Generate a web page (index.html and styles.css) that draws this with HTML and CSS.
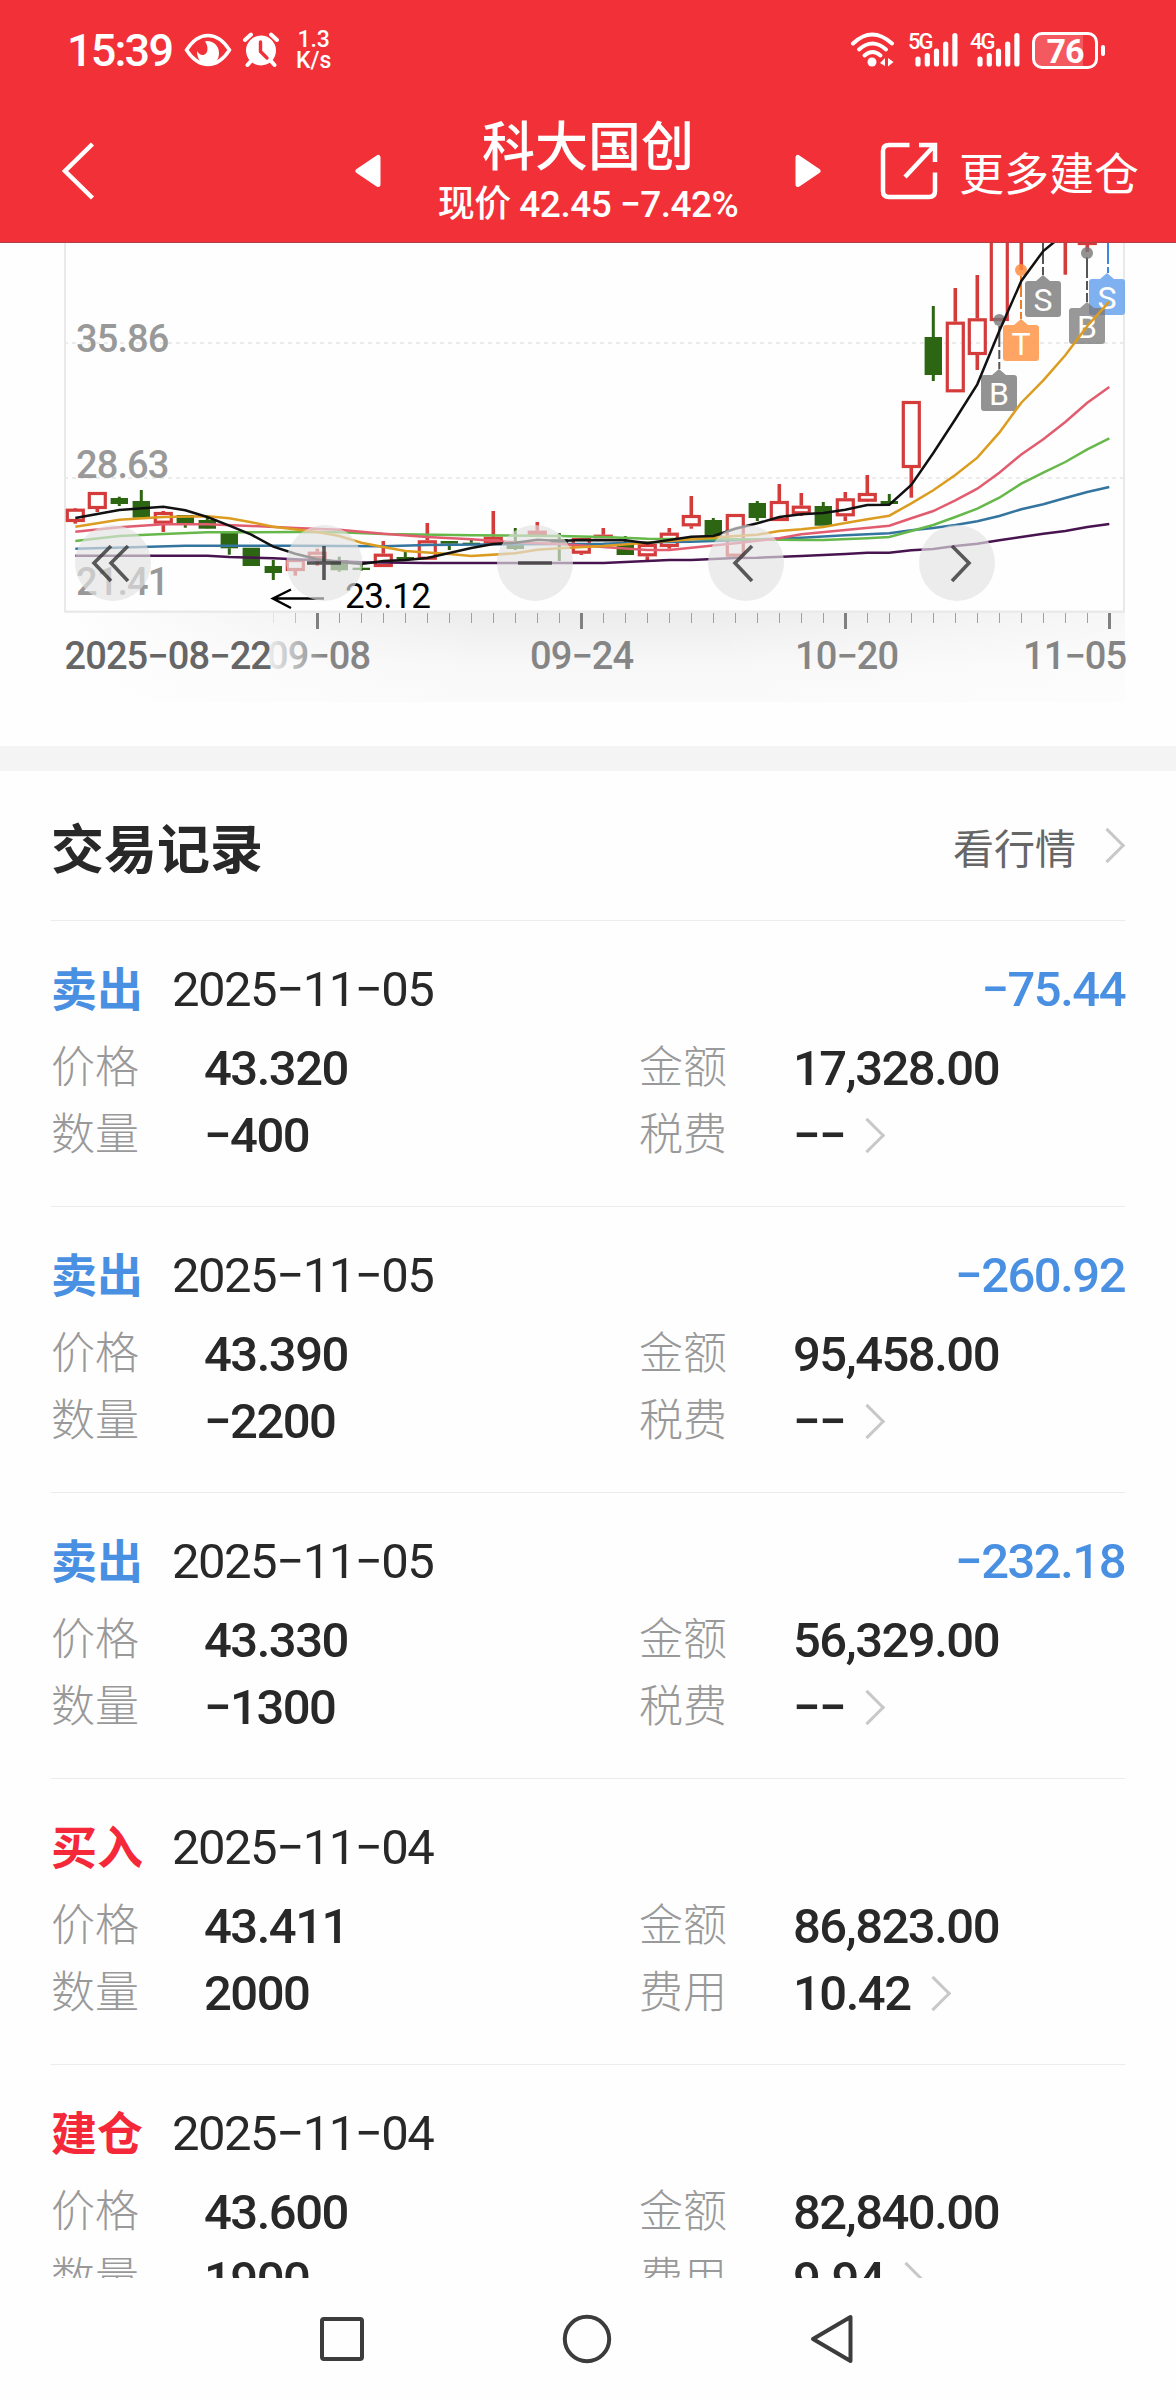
FILE: index.html
```html
<!DOCTYPE html>
<html lang="zh-CN">
<head>
    <meta charset="UTF-8">
    <meta name="viewport" content="width=device-width, initial-scale=1.0">
    <title>科大国创</title>
    <link rel="stylesheet" href="styles.css">
</head>
<body>

<header class="header">
    <div class="status-bar">
        <span class="clock">15:39</span>
        <svg class="eye" width="48" height="36" viewBox="0 0 48 36">
            <path d="M2.5 18 C9 8 16 3.500 24 3.500 S39 8 45.500 18 C39 28 32 32.500 24 32.500 S9 28 2.500 18Z" fill="none" stroke="#fff" stroke-width="3.400"/>
            <path d="M23 9 C30 9 35 14 35 21 C35 28 31 32 24 32 C17 32 13 27 13 19 C15 22 17 23.500 19.500 23 C24 22 25 15 21 9.500Z" fill="#fff"/>
        </svg>
        <svg class="alarm" width="36" height="36" viewBox="0 0 36 36">
            <circle cx="18" cy="18.500" r="15" fill="#fff"/>
            <path d="M2 8 L8 2.500 M34 8 L28 2.500 M8 29 L4.500 33 M28 29 L31.500 33" stroke="#fff" stroke-width="4" stroke-linecap="round"/>
            <path d="M17.500 10 V19.500 L24 26" fill="none" stroke="#f23038" stroke-width="3.400" stroke-linecap="round"/>
        </svg>
        <span class="speed">1.3<br>K/s</span>
        <div class="status-right">
            <svg class="wifi" width="46" height="36" viewBox="0 0 46 36">
                <g fill="none" stroke="#fff" stroke-width="4" stroke-linecap="round">
                    <path d="M3 11.500 Q22 -6.500 42 11.500"/>
                    <path d="M9 17.500 Q22.500 5.500 36 17.500"/>
                    <path d="M14.500 23.500 Q22.500 16.500 30.500 23.500"/>
                </g>
                <circle cx="22" cy="30" r="4.500" fill="#fff"/>
                <path d="M30 31 L35 26 V34Z M43.500 30 L38 26 V34.500Z" fill="#fff"/>
            </svg>
            <div class="signal">
                <span>5G</span>
                <svg width="43" height="36" viewBox="0 0 43 36"><path d="M3 27 V32 M12.300 23.500 V32 M21.500 19 V32 M30.700 12 V32 M39.900 3.500 V32" stroke="#fff" stroke-width="5.200" stroke-linecap="round"/></svg>
            </div>
            <div class="signal">
                <span>4G</span>
                <svg width="43" height="36" viewBox="0 0 43 36"><path d="M3 27 V32 M12.300 23.500 V32 M21.500 19 V32 M30.700 12 V32 M39.900 3.500 V32" stroke="#fff" stroke-width="5.200" stroke-linecap="round"/></svg>
            </div>
            <div class="battery">76</div>
        </div>
    </div>

    <nav class="title-bar">
        <svg class="back" width="36" height="60" viewBox="0 0 36 60"><path d="M32.500 3 L5 30 L32.500 57" fill="none" stroke="#fff" stroke-width="4.500"/></svg>
        <svg class="prev" width="28" height="34" viewBox="0 0 28 34"><path d="M24 3.500 V30.500 L4 17Z" fill="#fff" stroke="#fff" stroke-width="5" stroke-linejoin="round"/></svg>
        <div class="stock">
            <h1>科大国创</h1>
            <p>现价 42.45 −7.42%</p>
        </div>
        <svg class="next" width="28" height="34" viewBox="0 0 28 34"><path d="M4 3.500 V30.500 L24 17Z" fill="#fff" stroke="#fff" stroke-width="5" stroke-linejoin="round"/></svg>
        <div class="more">
            <svg width="60" height="60" viewBox="0 0 60 60">
                <path d="M30.500 4 H10 Q4 4 4 10 V50 Q4 56 10 56 H50 Q56 56 56 50 V31.500 M40 4 H56 V21 M55 5 L26 36" fill="none" stroke="#fff" stroke-width="4.500"/>
            </svg>
            <span>更多建仓</span>
        </div>
    </nav>
</header>

<main class="content">
    <section class="chart">
        <svg id="kline" width="1176" height="504" viewBox="0 242 1176 504"></svg>
    </section>

    <section class="trades">
        <div class="trades-head">
            <h2>交易记录</h2>
            <a class="quote">看行情 <i class="arrow"></i></a>
        </div>

        <article class="trade">
            <div class="trade-top"><b class="sell">卖出</b><span>2025−11−05</span><em>−75.44</em></div>
            <dl><dt>价格</dt><dd>43.320</dd><dt>金额</dt><dd>17,328.00</dd></dl>
            <dl><dt>数量</dt><dd>−400</dd><dt>税费</dt><dd>−− <i class="arrow"></i></dd></dl>
        </article>
        <article class="trade">
            <div class="trade-top"><b class="sell">卖出</b><span>2025−11−05</span><em>−260.92</em></div>
            <dl><dt>价格</dt><dd>43.390</dd><dt>金额</dt><dd>95,458.00</dd></dl>
            <dl><dt>数量</dt><dd>−2200</dd><dt>税费</dt><dd>−− <i class="arrow"></i></dd></dl>
        </article>
        <article class="trade">
            <div class="trade-top"><b class="sell">卖出</b><span>2025−11−05</span><em>−232.18</em></div>
            <dl><dt>价格</dt><dd>43.330</dd><dt>金额</dt><dd>56,329.00</dd></dl>
            <dl><dt>数量</dt><dd>−1300</dd><dt>税费</dt><dd>−− <i class="arrow"></i></dd></dl>
        </article>
        <article class="trade">
            <div class="trade-top"><b class="buy">买入</b><span>2025−11−04</span></div>
            <dl><dt>价格</dt><dd>43.411</dd><dt>金额</dt><dd>86,823.00</dd></dl>
            <dl><dt>数量</dt><dd>2000</dd><dt>费用</dt><dd>10.42 <i class="arrow"></i></dd></dl>
        </article>
        <article class="trade">
            <div class="trade-top"><b class="buy">建仓</b><span>2025−11−04</span></div>
            <dl><dt>价格</dt><dd>43.600</dd><dt>金额</dt><dd>82,840.00</dd></dl>
            <dl><dt>数量</dt><dd>1900</dd><dt>费用</dt><dd>9.94 <i class="arrow"></i></dd></dl>
        </article>
    </section>
</main>

<footer class="nav-keys">
    <svg width="48" height="52" viewBox="0 0 48 52"><rect x="4" y="6" width="40" height="40" rx="2" fill="none" stroke="#3c3c3c" stroke-width="4"/></svg>
    <svg width="52" height="52" viewBox="0 0 52 52"><circle cx="26" cy="26" r="22.200" fill="none" stroke="#3c3c3c" stroke-width="4"/></svg>
    <svg width="48" height="52" viewBox="0 0 48 52"><path d="M42.500 4 V48 L5 26Z" fill="none" stroke="#3c3c3c" stroke-width="4" stroke-linejoin="round"/></svg>
</footer>

<script src="script.js"></script>
</body>
</html>
```

FILE: styles.css
```css
* {
    box-sizing: border-box;
}

body {
    font-family: Roboto, "Noto Sans CJK SC", sans-serif;
    background-color: #fefefe;
    color: #282828;
    margin: 0;
    width: 1176px;
    height: 2400px;
    overflow: hidden;
    display: flex;
    flex-direction: column;
}

h1, h2, p, dl, dd {
    margin: 0;
}

.header {
    height: 243px;
    flex: none;
    background-color: #f23038;
    border-bottom: 1px solid #b04046;
    color: white;
}

/* phone status bar */
.status-bar {
    height: 100px;
    padding: 0 70px 0 67px;
    display: flex;
    align-items: center;
}

.clock {
    width: 117px;
    font-size: 45px;
    font-weight: 500;
    letter-spacing: -1.8px;
}

.alarm {
    margin-left: 11px;
}

.speed {
    margin-left: 17px;
    font-size: 23px;
    line-height: 21px;
    text-align: center;
    font-weight: 500;
}

.status-right {
    margin-left: auto;
    display: flex;
    align-items: center;
}

.signal {
    position: relative;
    width: 50px;
    height: 36px;
    margin-left: 12px;
    display: flex;
    justify-content: flex-end;
}

.signal span {
    position: absolute;
    left: 0;
    top: 0;
    font-size: 22px;
    line-height: 20px;
    font-weight: 500;
    letter-spacing: -2px;
}

.battery {
    position: relative;
    width: 66px;
    height: 37px;
    margin-left: 12px;
    margin-right: 8px;
    border: 3px solid white;
    border-radius: 10px;
    background: linear-gradient(to right, rgba(255, 255, 255, .2) 48px, transparent 48px);
    font-size: 34px;
    font-weight: bold;
    line-height: 32px;
    letter-spacing: -1px;
    text-align: center;
}

.battery::after {
    content: '';
    position: absolute;
    right: -10px;
    top: 10px;
    width: 4px;
    height: 11px;
    border-radius: 2px;
    background-color: white;
}

/* stock title */
.title-bar {
    height: 142px;
    padding: 0 37px 0 60px;
    display: flex;
    align-items: center;
}

.prev {
    margin-left: 258px;
}

.stock {
    width: 412px;
    text-align: center;
}

.stock h1 {
    font-size: 53px;
    line-height: 68px;
    font-weight: 500;
}

.stock p {
    font-size: 37px;
    line-height: 46px;
    font-weight: 500;
    letter-spacing: -.5px;
}

.more {
    margin-left: auto;
    display: flex;
    align-items: center;
    gap: 20px;
    font-size: 45px;
}

.content {
    height: 2035px;
    flex: none;
    overflow: hidden;
}

.chart {
    height: 528px;
    border-bottom: 25px solid #f4f4f4;
}

.chart svg {
    display: block;
}

.axis {
    font-size: 38px;
    letter-spacing: -.9px;
    font-weight: 500;
    fill: #999;
}

.date {
    fill: #858585;
}

.date-start {
    fill: #666;
}

.low {
    font-size: 35px;
    letter-spacing: -.5px;
    fill: #000;
}

.mark {
    font-size: 32px;
    fill: white;
    text-anchor: middle;
}

/* trade list */
.trades {
    padding: 0 51px;
}

.trades-head {
    height: 150px;
    display: flex;
    align-items: center;
    justify-content: space-between;
    border-bottom: 1px solid #ececec;
}

.trades-head h2 {
    font-size: 53px;
    font-weight: bold;
}

.quote {
    display: flex;
    align-items: center;
    font-size: 41px;
    color: #666;
}

.arrow {
    width: 25px;
    height: 25px;
    border-top: 3px solid #c8c8c8;
    border-right: 3px solid #c8c8c8;
    transform: rotate(45deg);
}

.quote .arrow {
    margin-left: 19px;
    margin-right: 5px;
}

.trade {
    height: 286px;
    padding-top: 29px;
    border-bottom: 1px solid #ececec;
    font-size: 49px;
    letter-spacing: -1.5px;
    font-weight: 500;
}

.trade-top {
    height: 85px;
    line-height: 80px;
    display: flex;
}

.trade-top b {
    width: 121px;
    font-size: 46px;
    letter-spacing: 0;
}

.trade-top span {
    font-weight: 400;
}

.trade-top em {
    margin-left: auto;
    font-style: normal;
    color: #4a90e2;
}

.sell {
    color: #4a90e2;
}

.buy {
    color: #f5283a;
}

.trade dl {
    display: grid;
    grid-template-columns: 153px 435px 154px 1fr;
    height: 67px;
    line-height: 67px;
}

.trade dt {
    font-size: 44px;
    font-weight: 300;
    letter-spacing: 0;
    color: #999;
}

.trade dd {
    display: flex;
    align-items: center;
}

.trade dd .arrow {
    margin-left: 10px;
}

.nav-keys {
    height: 122px;
    flex: none;
    padding: 0 320px 0 318px;
    display: flex;
    align-items: center;
    justify-content: space-between;
}
```

FILE: script.js
```javascript
const svg = document.getElementById('kline');
const RED = '#d43c3c';
const GREEN = '#2d6612';
const xAt = i => 75.3 + 22 * i;
let out = '';

// [up, bodyTop, bodyBottom, wickTop, wickBottom]
const candles = [
    [1, 507.7, 521, 507, 522.7], [1, 491, 508, 491, 511], [0, 497, 503, 495.7, 505], [0, 500, 516.7, 489, 516],
    [1, 511, 522.7, 510, 531], [0, 514, 522, 514, 526.7], [0, 519, 527.7, 516.7, 528], [0, 532, 547.3, 532, 553.7],
    [0, 546.7, 565, 547, 565], [0, 565, 572, 559, 579], [1, 558, 570, 558, 574.7], [1, 550.7, 558, 547.7, 565],
    [0, 559, 569.3, 555.7, 570.7], [0, 566.7, 569, 563, 569.7], [1, 552.7, 566, 540, 566], [0, 556, 558, 550.7, 560],
    [1, 539.3, 558.7, 522, 558], [0, 540, 542.7, 540, 549], [0, 541.7, 543.7, 539, 544], [1, 535.7, 542.7, 510, 542],
    [0, 541.7, 548, 527, 549], [1, 529.7, 535, 521, 535], [0, 538, 543, 532, 560], [1, 537, 552.7, 537, 554],
    [1, 533.7, 537, 527, 537], [0, 542, 554, 535, 554], [1, 543, 555.3, 543, 559], [1, 531.7, 546, 527, 547.7],
    [1, 514, 525.3, 495, 527.7], [0, 519, 536, 517, 536], [1, 513, 555.7, 513, 555], [0, 502, 517, 500, 520],
    [1, 500, 520, 483, 520], [1, 504.7, 513.3, 492, 515], [0, 505, 524.7, 501, 524], [1, 497.3, 515.3, 491, 520],
    [1, 492, 500.7, 474, 501], [0, 500, 503, 493, 503], [1, 400, 467, 400, 496.7], [0, 336, 374, 305, 380],
    [1, 320.7, 391.3, 287, 391], [1, 317.3, 354, 274, 369], [1, 200, 320, 200, 320], [1, 200, 210, 200, 269],
    null, [1, 200, 210, 200, 273.7], [1, 200, 244, 200, 251]
];

// moving averages as [index, y]
const lines = [
    ['#481450', [[0, 554.7], [6, 554.7], [7, 556], [9, 557.3], [11, 559.3], [13, 561.3], [16, 562], [24, 562], [25, 561], [27, 559], [28, 559], [30, 557], [31, 556.7], [33, 555], [35, 553], [36, 551.7], [37, 551.7], [38, 549.3], [39, 548], [40, 545], [41, 542.7], [42, 539.3], [43, 536], [44, 532.7], [45, 530], [46, 526], [47, 523]]],
    ['#34759f', [[0, 547.7], [3, 546], [5, 544.7], [10, 544.7], [14, 545.3], [16, 544], [20, 543.3], [24, 542.7], [26, 541.3], [28, 540.7], [30, 539.3], [32, 537.7], [33, 536.7], [35, 534.3], [37, 532.3], [38, 529.3], [39, 527], [40, 524], [41, 520.3], [42, 515], [43, 508.3], [44, 503.3], [45, 497], [46, 491], [47, 486]]],
    ['#66b84a', [[0, 540], [2, 535], [4, 533], [6, 531.3], [10, 531], [12, 531.3], [14, 533], [18, 534.3], [22, 535], [24, 536], [26, 537.7], [30, 538.3], [33, 539], [34, 539], [36, 537.3], [37, 536], [38, 530], [39, 524], [40, 516], [41, 507.7], [42, 496.7], [43, 482.7], [44, 471.7], [45, 461], [46, 448.3], [47, 437.3]]],
    ['#e25c70', [[0, 530.7], [2, 526.3], [4, 523.3], [6, 523.3], [8, 525], [10, 527], [12, 528.7], [14, 532.7], [16, 536], [18, 538.3], [20, 541.3], [22, 543], [24, 546], [26, 549], [27, 549], [28, 546.7], [30, 542.3], [32, 537.3], [33, 533.3], [35, 529], [37, 524.7], [38, 517.3], [39, 510], [40, 499.3], [41, 487.7], [42, 471.7], [43, 453.5], [44, 438.3], [45, 421], [46, 401.7], [47, 386]]],
    ['#dc9c20', [[0, 525.7], [2, 518.7], [4, 516], [6, 515.3], [7, 517.3], [8, 521.3], [9, 525.7], [11, 531], [12, 535], [13, 541.7], [14, 546], [15, 550], [17, 553], [18, 555], [20, 552.3], [21, 548.7], [22, 547.3], [24, 545], [26, 541.7], [28, 538.3], [30, 535], [31, 533.7], [32, 530], [33, 528.3], [34, 526], [35, 522], [36, 518.3], [37, 514.7], [38, 502.3], [39, 489.3], [40, 474], [41, 456.7], [42, 431.7], [43, 401.7], [44, 379.3], [45, 354.3], [46, 325], [47, 300.7]]],
    ['#111', [[0, 517], [2, 509], [4, 505.7], [5, 509.3], [6, 516], [7, 524.7], [8, 533.7], [9, 545.7], [10, 552.7], [11, 558.3], [12, 561], [13, 563], [14, 560], [15, 559], [16, 557], [17, 552], [18, 547], [19, 543], [20, 541.7], [21, 538.7], [22, 540], [23, 539], [25, 539.3], [26, 542.3], [27, 539], [28, 535.7], [29, 535], [30, 527.7], [31, 522.3], [32, 516], [33, 513.3], [34, 512], [35, 508.7], [36, 504], [37, 503.7], [38, 484], [39, 452], [40, 418.3], [41, 383.3], [42, 330], [43, 280], [44, 250], [45, 232]]]
];

function rect(x, y, w, h, attrs) {
    out += `<rect x="${x}" y="${y}" width="${w}" height="${h}" ${attrs}/>`;
}

function line(x1, y1, x2, y2, attrs) {
    out += `<line x1="${x1}" y1="${y1}" x2="${x2}" y2="${y2}" ${attrs}/>`;
}

// date strip under the chart
out += `<defs>
    <linearGradient id="strip" x2="0" y2="1"><stop offset="0" stop-color="#ececec"/><stop offset=".6" stop-color="#f8f8f8"/><stop offset="1" stop-color="#fafafa"/></linearGradient>
    <linearGradient id="fade"><stop offset="0" stop-color="#fefefe"/><stop offset="1" stop-color="#fefefe" stop-opacity="0"/></linearGradient>
    <linearGradient id="label" gradientUnits="userSpaceOnUse" x1="262" x2="325" y1="0" y2="0"><stop offset="0" stop-color="#858585" stop-opacity="0"/><stop offset="1" stop-color="#858585"/></linearGradient>
</defs>`;
rect(65, 611, 1060, 90, 'fill="url(#strip)"');
rect(64, 612, 420, 90, 'fill="url(#fade)"');
rect(700, 612, 425, 89, 'fill="url(#fade)" transform="translate(1825) scale(-1 1)" opacity=".6"');

// frame and grid
out += '<path d="M65 242 V610.500 H1124 V242" fill="none" stroke="#e9e9e9" stroke-width="2"/>';
line(64, 342, 1123, 342, 'stroke="#ebebeb" stroke-width="2" stroke-dasharray="4 4"');
line(64, 477, 1123, 477, 'stroke="#ebebeb" stroke-width="2" stroke-dasharray="4 4"');
out += '<text class="axis" x="76" y="351">35.86</text><text class="axis" x="76" y="477">28.63</text><text class="axis" x="76" y="594">21.41</text>';

for (let i = 9; i < 48; i++) {
    const major = (i - 11) % 12 === 0;
    line(xAt(i) + .2, 612, xAt(i) + .2, major ? 628 : 622, `stroke="${major ? '#808080' : '#a0a0a0'}" stroke-width="${major ? 3 : 1}" opacity="${i === 9 ? .2 : i === 10 ? .6 : 1}"`);
}
out += `<text class="axis date-start" x="64.500" y="668">2025−08−22</text>
    <text class="axis" x="267" y="668" style="fill:url(#label)">09−08</text>
    <text class="axis date" x="530" y="668">09−24</text>
    <text class="axis date" x="795" y="668">10−20</text>
    <text class="axis date" x="1023" y="668">11−05</text>`;

candles.forEach((c, i) => {
    if (!c) return;
    const [up, top, bottom, high, low] = c;
    const x = xAt(i);
    const wick = `stroke="${up ? RED : GREEN}" stroke-width="${up ? 3.6 : 3}"`;
    if (high < top) line(x, high, x, top, wick);
    if (low > bottom) line(x, bottom, x, low, wick);
    if (up) rect(x - 8, top + 1.5, 16, Math.max(bottom - top - 3, .5), `fill="none" stroke="${RED}" stroke-width="3.2"`);
    else rect(x - 8.7, top, 17.4, bottom - top, `fill="${GREEN}"`);
});

// buy / sell / T marks
function stem(x, y1, y2, color) {
    line(x, y1, x, y2, `stroke="${color}" stroke-width="2" stroke-dasharray="21 3 9 3"`);
}
function mark(x, y, letter, color) {
    out += `<path d="M${x - 15} ${y} H${x - 7} L${x} ${y - 6} L${x + 7} ${y} H${x + 15} Q${x + 18} ${y} ${x + 18} ${y + 3} V${y + 33} Q${x + 18} ${y + 36} ${x + 15} ${y + 36} H${x - 15} Q${x - 18} ${y + 36} ${x - 18} ${y + 33} V${y + 3} Q${x - 18} ${y} ${x - 15} ${y}Z" fill="${color}"/>`;
    out += `<text class="mark" x="${x}" y="${y + 29.5}">${letter}</text>`;
}
stem(999.3, 325, 368, '#555');
stem(1021, 275, 318, '#f08028');
stem(1043, 242, 274, '#555');
stem(1087, 256, 301, '#555');
stem(1108, 242, 272, '#3f86e0');
out += `<circle cx="999.300" cy="319" r="6" fill="#777" opacity=".8"/>
    <circle cx="1021" cy="269" r="6" fill="#ff8c3c" opacity=".85"/>
    <circle cx="1087" cy="252" r="6" fill="#777" opacity=".8"/>`;
mark(999, 374, 'B', 'rgba(128,128,128,.85)');
mark(1021, 324, 'T', 'rgba(255,153,77,.88)');
mark(1043, 280, 'S', 'rgba(128,128,128,.85)');
mark(1107, 278, 'S', 'rgba(104,163,238,.85)');
mark(1087, 307, 'B', 'rgba(118,118,118,.75)');

lines.forEach(([color, pts]) => {
    out += `<polyline points="${pts.map(([i, y]) => xAt(i) + ',' + y).join(' ')}" fill="none" stroke="${color}" stroke-width="2.5"/>`;
});

// lowest price pointer
out += `<path d="M324 597.500 H273 M291 588.500 L273 597.500 L291 607" fill="none" stroke="#000" stroke-width="2.500"/>
    <text class="low" x="345" y="607">23.12</text>`;

// round control buttons
const icons = ['M111 545 L94 562 L111 580 M128 545 L111 562 L128 580', 'M307 562 H341 M324 545 V579', 'M518 562 H552', 'M752 545 L735 562 L752 580', 'M952 545 L969 562 L952 580'];
[113, 324.3, 535, 746, 957].forEach((x, i) => {
    out += `<circle cx="${x}" cy="562" r="38" fill="rgba(226,226,226,.66)"/>`;
    out += `<path d="${icons[i]}" fill="none" stroke="#333" stroke-opacity=".8" stroke-width="3.600"/>`;
});

svg.innerHTML = out;
```
